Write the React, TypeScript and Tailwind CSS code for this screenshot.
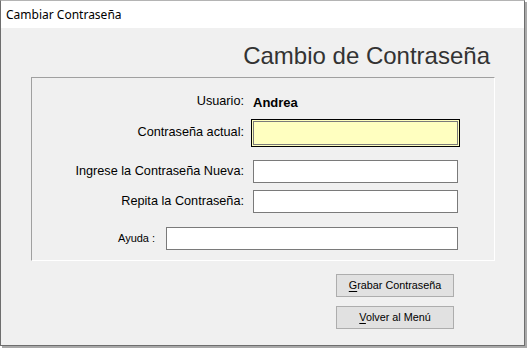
import React from "react";

const labelCls = "text-[12.7px] text-black text-right";

const Field = ({ width }: { width: string }) => (
  <div className={`${width} h-[23px] bg-white border border-[#7a7a7a]`} />
);

const App = () => {
  return (
    <div className="w-[527px] h-[348px] bg-white font-['Liberation_Sans',Arial,sans-serif]">
      <div className="w-[525px] h-[346px] flex flex-col border border-[#6e6e6e] border-t-[#b4b4b4] shadow-[2px_2px_0_#a9a9a9]">
        {/* title bar */}
        <div className="h-[27px] shrink-0 bg-white flex items-center pl-[5px]">
          <span className="text-[12px] text-black font-['Noto_Sans',sans-serif]">
            Cambiar Contraseña
          </span>
        </div>

        <div className="flex-1 bg-[#f0f0f0] flex flex-col">
          <h1 className="mt-[16px] pr-[34px] text-right text-[24px] leading-[24px] text-[#333333]">
            Cambio de Contraseña
          </h1>

          {/* group box */}
          <div className="ml-[30px] mt-[9px] w-[464px] h-[184px] border border-l-[#a0a0a0] border-t-[#a0a0a0] border-r-white border-b-white flex flex-col">
            <div className="mt-[16px] h-[16px] flex items-center">
              <span className={`w-[212px] ${labelCls}`}>Usuario:</span>
              <span className="ml-[9px] mt-[2px] text-[13px] font-bold text-black">Andrea</span>
            </div>

            <div className="mt-[9px] h-[28px] flex items-center">
              <span className={`w-[212px] ${labelCls}`}>Contraseña actual:</span>
              <div className="ml-[7px] w-[209px] h-[28px] bg-[#ffffc0] border border-black p-[1px]">
                <div className="w-full h-full bg-[#ffffc0] border border-[#7a7a7a]" />
              </div>
            </div>

            <div className="mt-[13px] h-[23px] flex items-center">
              <span className={`w-[212px] ${labelCls}`}>Ingrese la Contraseña Nueva:</span>
              <div className="ml-[9px]">
                <Field width="w-[205px]" />
              </div>
            </div>

            <div className="mt-[7px] h-[23px] flex items-center">
              <span className={`w-[212px] ${labelCls}`}>Repita la Contraseña:</span>
              <div className="ml-[9px]">
                <Field width="w-[205px]" />
              </div>
            </div>

            <div className="mt-[14px] h-[23px] flex items-center pl-[86px]">
              <span className="w-[48px] text-[11px] text-black">Ayuda :</span>
              <Field width="w-[292px]" />
            </div>
          </div>

          {/* buttons */}
          <div className="ml-[335px] mt-[13px] flex flex-col gap-[9px]">
            <button className="w-[118px] h-[23px] bg-[#e1e1e1] border border-[#adadad] text-[10.8px] text-black">
              <span className="underline underline-offset-[2px]">G</span>rabar Contraseña
            </button>
            <button className="w-[118px] h-[23px] bg-[#e1e1e1] border border-[#adadad] text-[10.8px] text-black">
              <span className="underline underline-offset-[2px]">V</span>olver al Menú
            </button>
          </div>
        </div>
      </div>
    </div>
  );
};

export default App;
